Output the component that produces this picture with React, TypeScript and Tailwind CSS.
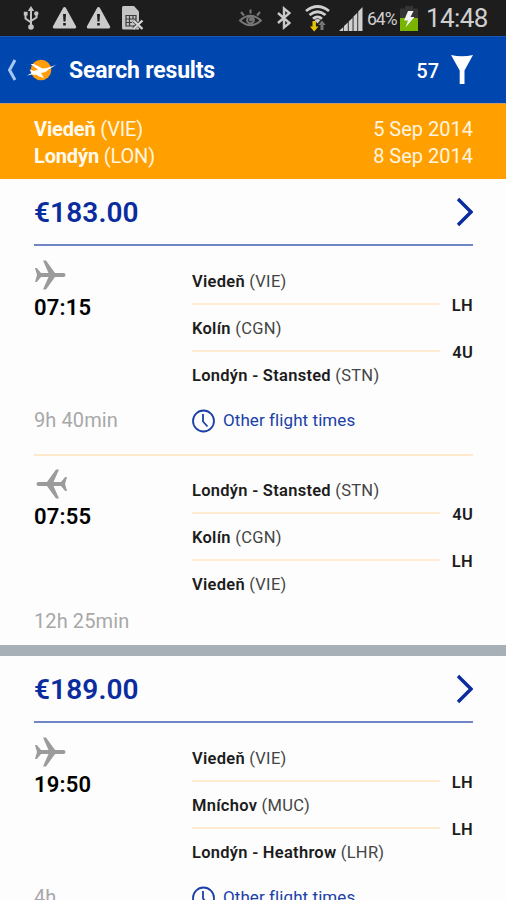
interface Leg {
  time: string
  duration: string
  stops: { city: string; code: string }[]
  carriers: string[]
  inbound?: boolean
  otherTimes?: boolean
}

interface Result {
  price: string
  legs: Leg[]
}

const vienna = { city: 'Viedeň', code: 'VIE' }
const cologne = { city: 'Kolín', code: 'CGN' }
const stansted = { city: 'Londýn - Stansted', code: 'STN' }

const results: Result[] = [
  {
    price: '€183.00',
    legs: [
      {
        time: '07:15',
        duration: '9h 40min',
        stops: [vienna, cologne, stansted],
        carriers: ['LH', '4U'],
        otherTimes: true,
      },
      {
        time: '07:55',
        duration: '12h 25min',
        stops: [stansted, cologne, vienna],
        carriers: ['4U', 'LH'],
        inbound: true,
      },
    ],
  },
  {
    price: '€189.00',
    legs: [
      {
        time: '19:50',
        duration: '4h',
        stops: [vienna, { city: 'Mníchov', code: 'MUC' }, { city: 'Londýn - Heathrow', code: 'LHR' }],
        carriers: ['LH', 'LH'],
        otherTimes: true,
      },
    ],
  },
]

function UsbIcon() {
  return (
    <svg className="w-4 h-6" viewBox="0 0 16 24" fill="none" stroke="#c4c4c4" strokeWidth="2">
      <path d="M8 4v16M2.5 8v4.5L8 16.5M13.5 8v3.5L8 15" />
      <path d="M8 0l3.2 5H4.800zM.8 5.800h3.800v3.800H.8z" fill="#c4c4c4" stroke="none" />
      <circle cx="13.3" cy="7.5" r="2.2" fill="#c4c4c4" stroke="none" />
      <circle cx="8" cy="21" r="2.8" fill="#c4c4c4" stroke="none" />
    </svg>
  )
}

function WarningIcon() {
  return (
    <svg className="w-[25px] h-6" viewBox="0 0 25 24">
      <path d="M12.5 2.5L22.7 21H2.3z" fill="#cbcbcb" stroke="#cbcbcb" strokeWidth="3" strokeLinejoin="round" />
      <path d="M11 8h3l-.5 7.5h-2zM11.2 17h2.6v2.6h-2.6z" fill="#1d1d1d" />
    </svg>
  )
}

function SimIcon() {
  return (
    <svg className="w-[22px] h-6" viewBox="0 0 22 24">
      <path d="M0 1.5Q0 0 1.5 0H12l5 5.5V23.5H1.5Q0 23.5 0 22z" fill="#c4c4c4" />
      <path d="M4 9.5h10v10.5H4zM4 13h10M4 16.5h6M7.5 9.5v10.5M11 9.5v4" fill="none" stroke="#3c3c3c" strokeWidth="1.2" />
      <path d="M11.5 14.5l8.5 8M20 14.5l-8.500 8" stroke="#3a3a3a" strokeWidth="3.4" />
      <path d="M11.5 14.5l9 8.500M20.500 14.500l-9 8.500" stroke="#d6d6d6" strokeWidth="2.2" />
    </svg>
  )
}

function EyeIcon() {
  return (
    <svg className="w-[23px] h-6" viewBox="0 0 23 24" fill="none" stroke="#777" strokeWidth="2">
      <path d="M1 14.5Q11.500 5 22 14.5Q11.500 24 1 14.5z" />
      <circle cx="11.5" cy="14" r="3.4" />
      <path d="M2 6l3 3.5M11.5 3.500v4M21 6l-3 3.5" />
      <circle cx="12" cy="13.5" r="1" fill="#777" />
    </svg>
  )
}

function BluetoothIcon() {
  return (
    <svg className="w-[14px] h-6" viewBox="0 0 14 24" fill="none" stroke="#c9c9c9" strokeWidth="2.4">
      <path d="M1 7l11.5 10L7 21.500V2.500l5.500 4.500L1 17" />
    </svg>
  )
}

function WifiIcon() {
  return (
    <svg className="w-[25px] h-[27px]" viewBox="0 0 25 27" fill="none" stroke="#cfcfcf" strokeWidth="2.8">
      <path d="M1 6Q12.5 -3 24 6M4.5 10Q12.5 3.500 20.5 10M8 13.800Q12.5 10 17 13.800" />
      <path d="M9.5 15Q12.5 13 15.5 15L12.5 18.5z" fill="#cfcfcf" stroke="none" />
      <path d="M7.500 16h3.400v5.500h2.600l-4.300 5-4.300-5h2.600z" fill="#e8c400" stroke="none" />
      <path d="M15.500 25v-5h-2.200l3.700-4.500 3.700 4.500h-2.200v5z" fill="#777" stroke="none" />
    </svg>
  )
}

function SignalIcon() {
  return (
    <svg className="w-6 h-6" viewBox="0 0 24 24" fill="#cfcfcf">
      <path d="M0 24l4.300-4v4zM5 19l3.800-3.500V24H5zM9.700 14.500l3.900-3.700V24H9.700zM14.500 9.500l3.800-3.700V24h-3.800zM19.200 4.500L23.500 0v24h-4.300z" />
    </svg>
  )
}

function BatteryIcon() {
  return (
    <svg className="w-[18px] h-[25px]" viewBox="0 0 18 25">
      <path d="M5 0h8v2.500h5V25H0V2.500h5z" fill="#343434" />
      <path d="M0 12h18v13H0z" fill="#78b400" />
      <path d="M8 5L4 14.500h4L5.500 21.500 14.500 11h-4l3-6z" fill="#f3f3f3" />
    </svg>
  )
}

function StatusBar() {
  return (
    <div className="flex h-9 items-center bg-[#1d1d1d] pl-[23px] pr-[19px] text-[#cfcfcf]">
      <UsbIcon />
      <div className="ml-[13px] flex gap-[9px]">
        <WarningIcon />
        <WarningIcon />
      </div>
      <div className="ml-[11px]">
        <SimIcon />
      </div>
      <div className="ml-auto flex items-center">
        <EyeIcon />
        <div className="ml-[15px]"><BluetoothIcon /></div>
        <div className="ml-[14px]"><WifiIcon /></div>
        <div className="ml-[9px] pt-px"><SignalIcon /></div>
        <span className="ml-[4px] w-[32px] pt-[2px] text-[17.5px] tracking-[-1px]">64%</span>
        <div className="ml-[1px] pt-px"><BatteryIcon /></div>
        <span className="ml-[8px] w-[61px] text-right text-[26px] tracking-[-0.6px] whitespace-nowrap">14:48</span>
      </div>
    </div>
  )
}

function Logo() {
  return (
    <svg className="w-[30px] h-6" viewBox="0 0 30 24">
      <circle cx="14" cy="12" r="10.300" fill="#ff9d0a" />
      <path
        d="M29 7L21.500 11.500Q19 14.500 14 15L10 17 5 16.500 0 17.500 4.500 15 2.500 11.500 7 13 11 11.500 3.500 6 7 6 15.500 10.500 20 10z"
        fill="#fff"
      />
      <path d="M8.500 16l3.500 2.500 5 1.500-3-5z" fill="#fff" />
    </svg>
  )
}

function Header() {
  return (
    <header className="flex h-[67px] items-center border-t border-[#1c58b8] bg-[#0046af] pl-[7px] pr-[33px] text-white">
      <svg className="w-[10px] h-[22px]" viewBox="0 0 10 22" fill="none" stroke="#a6c6f2" strokeWidth="3">
        <path d="M8 1L2.500 11l5.500 10" />
      </svg>
      <div className="ml-[10px]"><Logo /></div>
      <h1 className="ml-[12px] pt-[2px] text-[23px] font-bold tracking-[-0.2px]">Search results</h1>
      <span className="ml-auto pt-[2px] text-[20px] font-medium">57</span>
      <svg className="ml-[12px] w-[22px] h-[30px]" viewBox="0 0 22 30" fill="#fff">
        <path d="M0 0Q11 2.5 22 0L13.5 15.5V29H8.700V15.5z" />
      </svg>
    </header>
  )
}

function Route() {
  return (
    <div className="flex h-[76px] items-center justify-between border-t border-[#c99a6a] bg-[#ffa000] pt-[2px] pl-[34px] pr-[33px] text-[20px] leading-[27px] text-[#fff5e0]">
      <div className="tracking-[-0.15px]">
        <p><b className="text-[#fffaf0]">Viedeň</b> (VIE)</p>
        <p><b className="text-[#fffaf0]">Londýn</b> (LON)</p>
      </div>
      <div className="text-right">
        <p>5 Sep 2014</p>
        <p>8 Sep 2014</p>
      </div>
    </div>
  )
}

function Plane({ inbound }: { inbound?: boolean }) {
  return (
    <svg className={inbound ? 'ml-[2px] w-8 h-[30px] -scale-x-100' : 'w-8 h-[30px]'} viewBox="0 0 32 30" fill="#9b9b9b">
      <path d="M1 8h1.800L7 13h7.500L9 .5h3L21 13h8.500a2 2 0 0 1 0 4H21L12 29.500H9L14.500 17H7l-4.200 5H1L3 15z" />
    </svg>
  )
}

function LegRow({ leg }: { leg: Leg }) {
  return (
    <div className={leg.inbound ? 'flex h-[189px]' : 'flex h-[210px]'}>
      <div className={leg.inbound ? 'w-[158px] pt-[13px]' : 'w-[158px] pt-[14px]'}>
        <Plane inbound={leg.inbound} />
        <p className="mt-[4px] text-[22px] leading-[28px] font-semibold tracking-[0.2px] text-black">{leg.time}</p>
        <p
          className={`text-[20px] leading-[28px] tracking-[0.1px] text-[#a8a8a8] ${
            leg.inbound ? 'mt-[76px]' : 'mt-[84px]'
          }`}
        >
          {leg.duration}
        </p>
      </div>
      <div className={leg.inbound ? 'flex-1 pt-[12px]' : 'flex-1 pt-[13px]'}>
        {leg.stops.map((stop, i) => (
          <div key={i} className="relative flex h-[47px] items-center text-[16.5px] tracking-[0.27px] text-[#444]">
            <p className="whitespace-nowrap">
              <b className="font-semibold text-[#1c1c1c]">{stop.city}</b> ({stop.code})
            </p>
            {leg.carriers[i] && (
              <div className="absolute inset-x-0 -bottom-[12px] flex h-6 items-center">
                <div className="-mt-1 h-[2px] w-[248px] bg-[#ffebcf]" />
                <span className="ml-auto font-semibold text-[#1c1c1c]">{leg.carriers[i]}</span>
              </div>
            )}
          </div>
        ))}
        {leg.otherTimes && (
          <div className="mt-[8px] flex items-center gap-[7px] text-[17px] tracking-[0.08px] text-[#1a40a8]">
            <svg className="w-6 h-6" viewBox="0 0 24 24" fill="none" stroke="#1a40a8" strokeWidth="1.8">
              <circle cx="11.5" cy="12" r="10.5" />
              <path d="M11 5v7.500l4.500 5" />
            </svg>
            Other flight times
          </div>
        )}
      </div>
    </div>
  )
}

function ResultCard({ result }: { result: Result }) {
  return (
    <section className="border-b-[11px] border-[#a7b0b6] pl-[34px] pr-[33px]">
      <div className="flex h-[67px] items-center justify-between border-b-2 border-[#7186c4]">
        <span className="pt-[2px] text-[28px] font-semibold tracking-[0.1px] text-[#0a2c9f]">{result.price}</span>
        <svg className="w-[17px] h-[30px]" viewBox="0 0 17 30" fill="none" stroke="#0a2c9f" strokeWidth="3.4">
          <path d="M2 2L15 15 2 28" />
        </svg>
      </div>
      <div className="divide-y-2 divide-[#ffe8cb]">
        {result.legs.map((leg) => (
          <LegRow key={leg.time} leg={leg} />
        ))}
      </div>
    </section>
  )
}

export default function App() {
  return (
    <div className="h-[900px] w-[506px] overflow-hidden bg-[#fdfdfd] font-['Roboto',sans-serif]">
      <StatusBar />
      <Header />
      <Route />
      {results.map((result) => (
        <ResultCard key={result.price} result={result} />
      ))}
    </div>
  )
}
